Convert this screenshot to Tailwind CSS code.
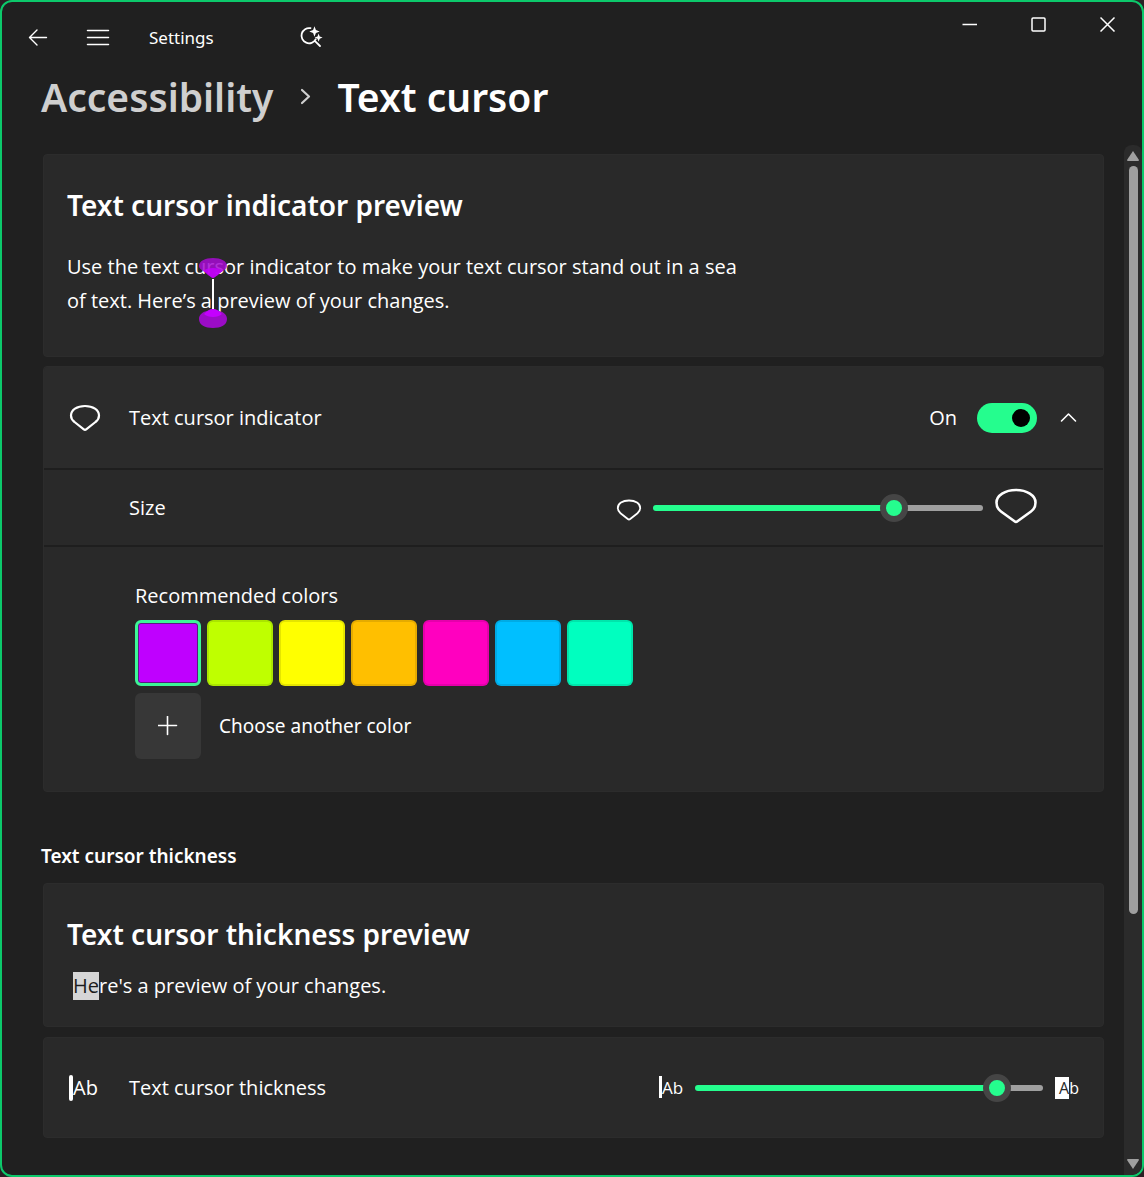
<!DOCTYPE html>
<html lang="en">
<head>
  <meta charset="UTF-8" />
  <meta name="viewport" content="width=device-width, initial-scale=1.0" />
  <title>Settings</title>
  <script src="https://cdn.jsdelivr.net/npm/@tailwindcss/browser@4"></script>
</head>
<body class="min-h-screen bg-[#2a2024] text-white font-['Open_Sans','Noto_Sans',sans-serif] text-xl">
  <div class="min-h-screen flex flex-col bg-[#202020] border-2 border-[#0cc96b] rounded-xl overflow-hidden">
    <!-- Title bar -->
    <header class="flex justify-between items-start">
      <nav class="flex items-center pt-5 pl-6">
        <button aria-label="Back" class="w-6 h-8 flex items-center justify-center">
          <svg class="w-5 h-5" viewBox="0 0 20 20" fill="none" stroke="currentColor" stroke-width="1.4" stroke-linecap="round" stroke-linejoin="round"><path d="M18.500 9.500H1.500M9 2L1.500 9.500L9 17" /></svg>
        </button>
        <button aria-label="Menu" class="w-6 h-8 ml-9 flex items-center justify-center">
          <svg class="w-6 h-5" viewBox="0 0 24 20" stroke="currentColor" stroke-width="1.5" stroke-linecap="round"><path d="M1.500 2.500H22.500M1.500 9.500H22.500M1.500 16.500H22.500" /></svg>
        </button>
        <span class="w-[150px] ml-[39px] text-[17px] font-['Noto_Sans',sans-serif]">Settings</span>
        <button aria-label="Search" class="w-6 h-8 flex items-center justify-center">
          <svg class="w-6 h-6" viewBox="0 0 24 24" fill="none" stroke="currentColor" stroke-width="1.8" stroke-linecap="round">
            <path d="M11.500 2.200A7.600 7.600 0 1 0 16.800 13.200M15.800 14.800L21 20" />
            <path d="M15.500 0.300L16.900 4.100L20.700 5.500L16.900 6.900L15.500 10.700L14.100 6.900L10.300 5.500L14.100 4.100Z" fill="currentColor" stroke="none" />
            <path d="M19.600 7.500L20.700 10.500L23.600 11.600L20.700 12.700L19.600 15.700L18.500 12.700L15.600 11.600L18.500 10.500Z" fill="currentColor" stroke="none" />
          </svg>
        </button>
      </nav>
      <div class="flex">
        <button aria-label="Minimize" class="w-[69px] h-11 flex items-center justify-center">
          <svg class="w-4 h-4" viewBox="0 0 16 16" stroke="currentColor" stroke-width="1.5"><path d="M0.500 8.500H15" /></svg>
        </button>
        <button aria-label="Maximize" class="w-[69px] h-11 flex items-center justify-center">
          <svg class="w-4 h-4" viewBox="0 0 16 16" fill="none" stroke="currentColor" stroke-width="1.5"><rect x="1" y="2" width="13" height="13" rx="1" /></svg>
        </button>
        <button aria-label="Close" class="w-[69px] h-11 flex items-center justify-center">
          <svg class="w-4 h-4" viewBox="0 0 16 16" stroke="currentColor" stroke-width="1.5"><path d="M0.500 1.500L14.500 15.500M14.500 1.500L0.500 15.500" /></svg>
        </button>
      </div>
    </header>

    <!-- Breadcrumb -->
    <h1 class="flex items-center pl-[39px] mt-[15px] text-[39px] leading-[56px] font-semibold font-['Noto_Sans',sans-serif]">
      <a href="#" class="text-[#cfcfcf]">Accessibility</a>
      <svg class="w-4 h-5 mx-6" viewBox="0 0 16 20" fill="none" stroke="#cfcfcf" stroke-width="2.200" stroke-linecap="round" stroke-linejoin="round"><path d="M5 3L12 9.500L5 16" /></svg>
      <span>Text cursor</span>
    </h1>

    <div class="flex-1 flex mt-5">
      <main class="flex-1 pl-[41px] pr-5 pt-[9px] pb-9">
        <section class="bg-[#292929] border border-[#2c2c2c] rounded px-[23px] pt-7 pb-7">
          <h2 class="text-[28px] leading-[44px] font-semibold font-['Noto_Sans',sans-serif]">Text cursor indicator preview</h2>
          <p class="mt-[23px] mb-[10px] max-w-[680px] leading-[34px]">Use the text cursor indicator to make your text cursor stand out in a sea of text. Here’s a<span class="relative"><svg class="absolute -left-3.5 -top-7.5 w-[30px] h-[72px]" viewBox="0 0 30 72" fill="none">
              <path d="M15 1C23 1 29 4 29 9C29 13 23 14 20 18Q16 21 15 21Q14 21 10 18C7 14 1 13 1 9C1 4 7 1 15 1Z" fill="#a70ad2" fill-opacity="0.85" />
              <path d="M5 14C9 10 21 10 25 14C22 15 17 21 15 21C13 21 8 15 5 14Z" fill="#c400ff" fill-opacity="0.8" />
              <path d="M15 22V52" stroke="#fff" stroke-width="2" />
              <path d="M15 52Q18 52 21 54C26 55 29 58 29 62C29 68 23 71 15 71C7 71 1 68 1 62C1 58 4 55 9 54Q12 52 15 52Z" fill="#9b0cc6" />
              <path d="M15 52Q19 52 24 57C20 61 10 61 6 57Q11 52 15 52Z" fill="#c400ff" />
            </svg></span> preview of your changes.</p>
        </section>

        <section class="mt-[9px] bg-[#292929] border border-[#2c2c2c] rounded">
          <div class="h-[101px] flex items-center bg-[#2b2b2b] rounded-t pl-[25px] pr-[18px]">
            <svg class="w-8 h-7" viewBox="0 0 32 28" fill="none" stroke="currentColor" stroke-width="2.2" stroke-linejoin="round"><path d="M16 2C24 2 30 6 30 11.500C30 14.500 28.500 16.500 26.500 18L17.500 25.200Q16 26.400 14.500 25.200L5.500 18C3.500 16.500 2 14.500 2 11.500C2 6 8 2 16 2Z" /></svg>
            <label for="indicator" class="ml-7 flex-1">Text cursor indicator</label>
            <span>On</span>
            <input id="indicator" type="checkbox" role="switch" checked class="appearance-none ml-5 w-[60px] h-[30px] rounded-full bg-[#595959] checked:bg-[#25fd8e] flex items-center px-[7px] checked:justify-end before:block before:w-[18px] before:h-[18px] before:rounded-full before:bg-black" />
            <button aria-label="Collapse" aria-expanded="true" class="ml-4 w-8 h-8 flex items-center justify-center">
              <svg class="w-[18px] h-3" viewBox="0 0 18 12" fill="none" stroke="currentColor" stroke-width="1.6" stroke-linecap="round" stroke-linejoin="round"><path d="M1.500 9L8.500 2L15.500 9" /></svg>
            </button>
          </div>

          <div class="h-[77px] flex items-center border-t-2 border-[#1e1e1e] pl-[85px] pr-[65px]">
            <label for="size" class="flex-1">Size</label>
            <svg class="w-[26px] h-[22px] mt-1" viewBox="0 0 26 22" fill="none" stroke="currentColor" stroke-width="1.8" stroke-linejoin="round"><path d="M13 1.500C19.500 1.500 24.200 4.500 24.200 9C24.200 11.500 23 13 21.500 14.200L14.200 20Q13 21 11.800 20L4.500 14.200C3 13 1.800 11.500 1.800 9C1.800 4.500 6.500 1.500 13 1.500Z" /></svg>
            <input id="size" type="range" min="0" max="100" value="75" class="appearance-none ml-[11px] w-[330px] h-1.5 rounded-full bg-[linear-gradient(to_right,#25fd8e_73%,#9f9f9f_73%)] [&::-webkit-slider-thumb]:appearance-none [&::-webkit-slider-thumb]:w-7 [&::-webkit-slider-thumb]:h-7 [&::-webkit-slider-thumb]:rounded-full [&::-webkit-slider-thumb]:border-[6px] [&::-webkit-slider-thumb]:border-[#454545] [&::-webkit-slider-thumb]:bg-[#25fd8e]" />
            <svg class="w-11 h-9 ml-[11px] mb-1" viewBox="0 0 44 36" fill="none" stroke="currentColor" stroke-width="2.600" stroke-linejoin="round"><path d="M22 2C33 2 41.500 7.500 41.500 14.500C41.500 18 40.500 21 37 23.500L23.500 33.300Q22 34.500 20.500 33.300L7 23.500C3.500 21 2.500 18 2.500 14.500C2.500 7.500 11 2 22 2Z" /></svg>
          </div>

          <div class="border-t-2 border-[#1e1e1e] pl-[91px] pt-[33px] pb-8">
            <h3 class="leading-8">Recommended colors</h3>
            <div class="flex gap-1.5 mt-2">
              <button aria-label="Purple" class="w-[66px] h-[66px] rounded-md border-3 border-[#3bf596] bg-[#bf00ff] shadow-[inset_0_0_0_1px_#5a1a80]"></button>
              <button aria-label="Lime" class="w-[66px] h-[66px] rounded-md border-2 border-black/10 bg-[#bfff00]"></button>
              <button aria-label="Yellow" class="w-[66px] h-[66px] rounded-md border-2 border-black/10 bg-[#ffff00]"></button>
              <button aria-label="Gold" class="w-[66px] h-[66px] rounded-md border-2 border-black/10 bg-[#ffbf00]"></button>
              <button aria-label="Pink" class="w-[66px] h-[66px] rounded-md border-2 border-black/10 bg-[#ff00bf]"></button>
              <button aria-label="Blue" class="w-[66px] h-[66px] rounded-md border-2 border-black/10 bg-[#00bfff]"></button>
              <button aria-label="Turquoise" class="w-[66px] h-[66px] rounded-md border-2 border-black/10 bg-[#00ffbf]"></button>
            </div>
            <div class="flex items-center mt-[7px]">
              <button id="custom" class="w-[66px] h-[66px] rounded-md bg-[#373737] flex items-center justify-center">
                <svg class="w-5 h-5" viewBox="0 0 20 20" stroke="currentColor" stroke-width="1.600" stroke-linecap="round"><path d="M9.500 0.500V18.500M0.500 9.500H18.500" /></svg>
              </button>
              <label for="custom" class="ml-[18px] text-[19px] font-['Noto_Sans',sans-serif]">Choose another color</label>
            </div>
          </div>
        </section>

        <h2 class="-ml-0.5 mt-12 leading-8 text-[19px] font-semibold font-['Noto_Sans',sans-serif]">Text cursor thickness</h2>

        <section class="mt-[11px] bg-[#292929] border border-[#2c2c2c] rounded px-[23px] pt-7 pb-[26px]">
          <h2 class="text-[28px] leading-[44px] font-semibold font-['Noto_Sans',sans-serif]">Text cursor thickness preview</h2>
          <p class="mt-4 ml-1.5 leading-7"><span class="inline-block bg-[#d6d6d6] text-[#1c1c1c]">He</span>re's a preview of your changes.</p>
        </section>

        <section class="mt-2.5 h-[101px] flex items-center bg-[#292929] border border-[#2c2c2c] rounded pl-[25px] pr-6">
          <span class="w-8 flex items-center"><span class="w-1 h-[26px] rounded-sm bg-white"></span>Ab</span>
          <label for="thickness" class="ml-7 flex-1">Text cursor thickness</label>
          <span class="flex items-center text-[17px]"><span class="w-[3px] h-[22px] bg-white"></span>Ab</span>
          <input id="thickness" type="range" min="0" max="100" value="90" class="appearance-none mx-3 w-[348px] h-1.5 rounded-full bg-[linear-gradient(to_right,#25fd8e_86%,#9f9f9f_86%)] [&::-webkit-slider-thumb]:appearance-none [&::-webkit-slider-thumb]:w-7 [&::-webkit-slider-thumb]:h-7 [&::-webkit-slider-thumb]:rounded-full [&::-webkit-slider-thumb]:border-[6px] [&::-webkit-slider-thumb]:border-[#454545] [&::-webkit-slider-thumb]:bg-[#25fd8e]" />
          <span class="flex items-center text-base leading-[22px]"><span class="bg-white text-[#292929] pl-1">A</span>b</span>
        </section>
      </main>

      <!-- Scrollbar -->
      <div class="w-[18px] flex flex-col items-center bg-[#2b2b2b] rounded-t-lg py-1.5">
        <svg class="w-3 h-2.5" viewBox="0 0 12 10" fill="#9f9f9f"><path d="M6 0L12 9Q12 10 11 10H1Q0 10 0 9Z" /></svg>
        <div class="mt-[5px] w-[9px] h-[748px] rounded-full bg-[#9f9f9f]"></div>
        <svg class="w-3 h-2.5 mt-auto" viewBox="0 0 12 10" fill="#9f9f9f"><path d="M6 10L0 1Q0 0 1 0H11Q12 0 12 1Z" /></svg>
      </div>
    </div>
  </div>
</body>
</html>
